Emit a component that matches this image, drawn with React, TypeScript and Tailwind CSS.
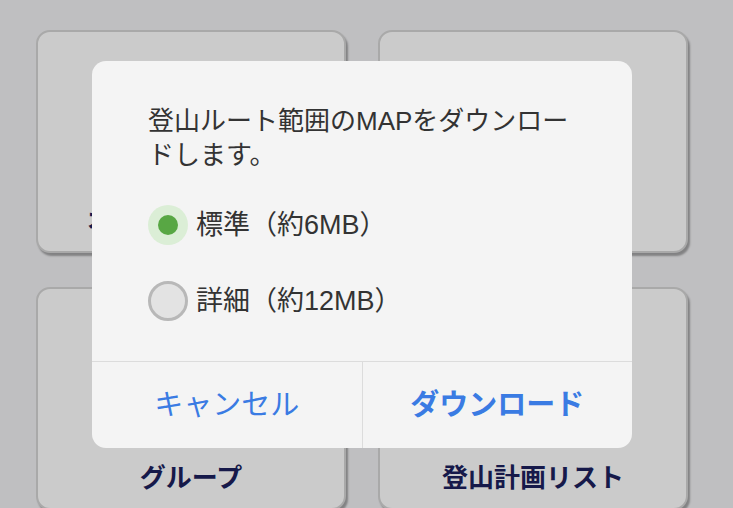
import React from "react";

const tiles = [
  { label: "オフラインマップ" },
  { label: "" },
  { label: "グループ" },
  { label: "登山計画リスト" },
];

function Tile({ label }: { label: string }) {
  return (
    <div className="flex h-[223px] flex-col items-center justify-end rounded-[14px] border-2 border-[#a9a9a9] bg-[#cbcbcb] pb-[15px] shadow-[2px_3px_2px_rgba(0,0,0,0.32)]">
      <span className="text-[26px] font-bold leading-[30px] text-[#16194a]">{label}</span>
    </div>
  );
}

export default function App() {
  return (
    <div
      className="relative h-[508px] w-[733px] overflow-hidden bg-[#bfbfc1]"
      style={{ fontFamily: '"Liberation Sans", "Noto Sans CJK JP", sans-serif' }}
    >
      {/* tiles behind the dialog */}
      <div className="grid w-[688px] grid-cols-2 gap-x-[32px] gap-y-[34px] pl-[36px] pt-[30px]">
        {tiles.map((t, i) => (
          <Tile key={i} label={t.label} />
        ))}
      </div>

      {/* dialog */}
      <div className="absolute left-[92px] top-[61px] flex h-[387px] w-[540px] flex-col rounded-[14px] bg-[#f4f4f4]">
        <div className="flex-1 pl-[56px] pt-[43px]">
          <p className="text-[26px] leading-[34px] text-[#333333]">
            登山ルート範囲のMAPをダウンロー
            <br />
            ドします。
          </p>

          <div className="mt-[33px] flex flex-col gap-[36px]">
            <label className="flex items-center gap-[8px]">
              <span className="flex h-[40px] w-[40px] items-center justify-center rounded-full bg-[#dbeed6]">
                <span className="h-[20px] w-[20px] rounded-full bg-[#58a744]" />
              </span>
              <span className="text-[27px] leading-[40px] text-[#333333]">標準（約6MB）</span>
            </label>
            <label className="flex items-center gap-[8px]">
              <span className="h-[40px] w-[40px] rounded-full border-[3px] border-[#b8b8b8] bg-[#e3e3e3]" />
              <span className="text-[27px] leading-[40px] text-[#333333]">詳細（約12MB）</span>
            </label>
          </div>
        </div>

        <div className="flex h-[87px] border-t border-[#dcdcdc]">
          <button className="flex flex-1 items-center justify-center border-r border-[#dcdcdc] pt-[2px] text-[29px] text-[#3a7be3]">
            キャンセル
          </button>
          <button className="flex flex-1 items-center justify-center pt-[2px] text-[29px] font-bold text-[#3a7be3]">
            ダウンロード
          </button>
        </div>
      </div>
    </div>
  );
}
